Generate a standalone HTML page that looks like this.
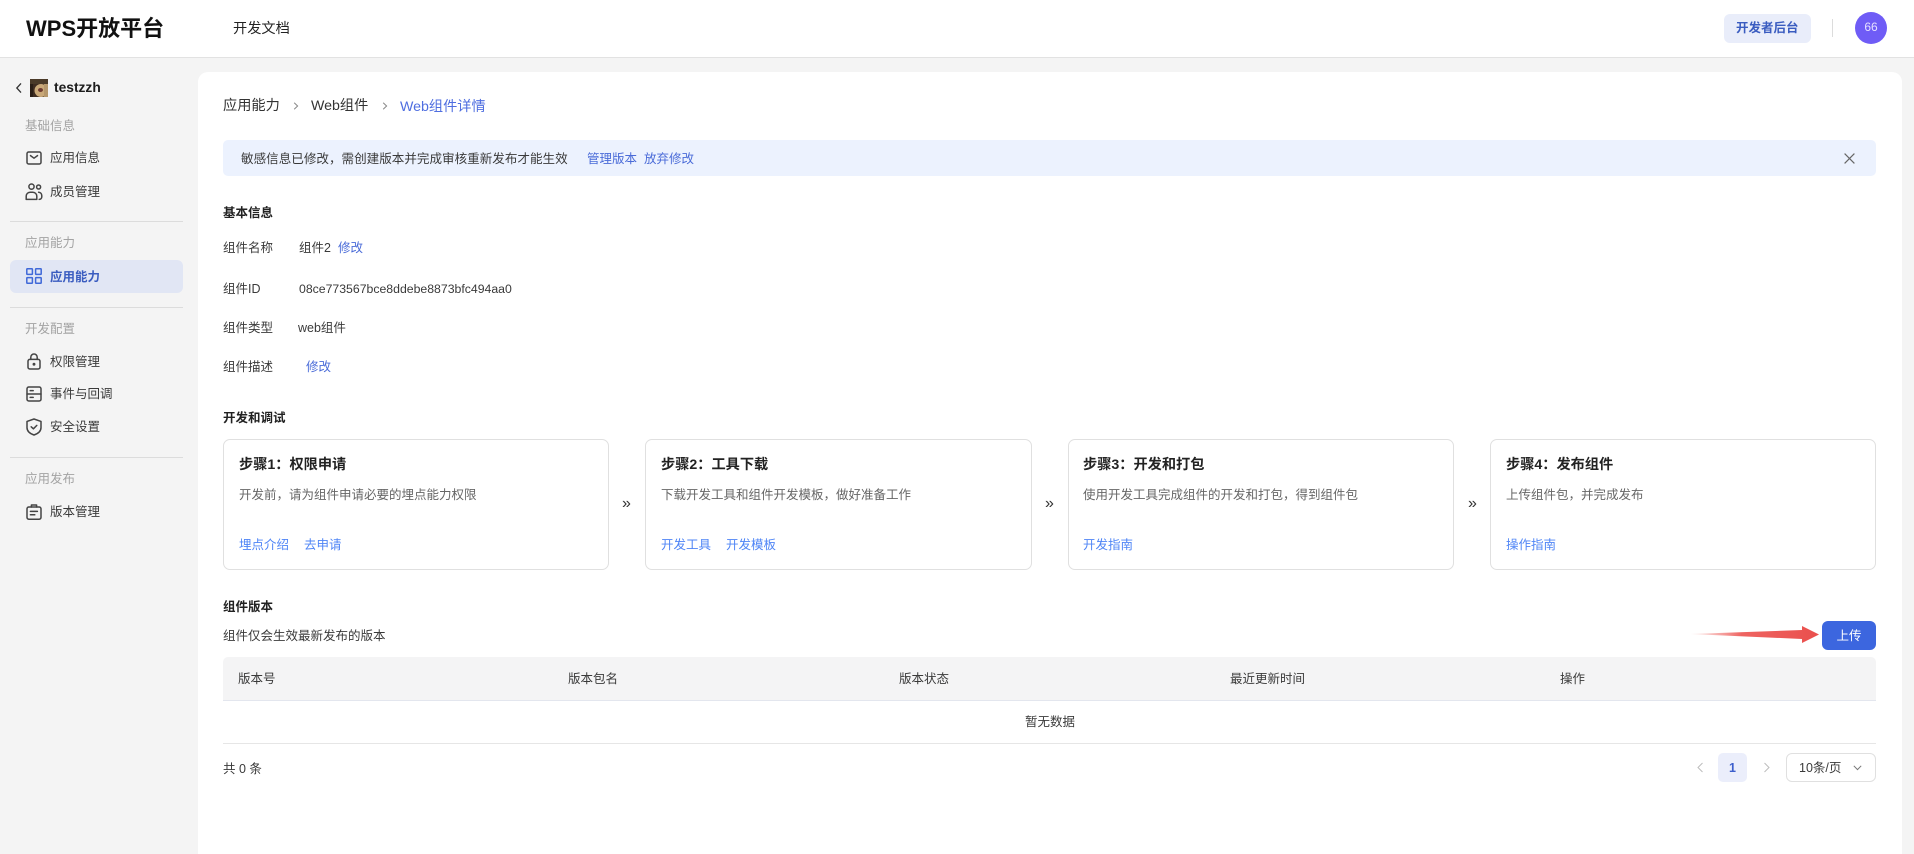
<!DOCTYPE html>
<html lang="zh-CN">
<head>
<meta charset="utf-8">
<title>WPS开放平台</title>
<style>
html,body{margin:0;padding:0;width:1914px;height:854px;overflow:hidden;background:#f4f4f4;}
body{position:relative;font-family:"Liberation Sans","Noto Sans CJK SC",sans-serif;font-size:12.5px;color:#333;}
.b{position:absolute;box-sizing:border-box;}
.t{position:absolute;line-height:20px;height:20px;white-space:nowrap;}
.bd{font-weight:700;color:#222;}
.link{color:#4a6bd8;}
.lk{color:#4f85f6;}
.gr{color:#a3a3a3;}
.dk{color:#3a3a3a;}
.desc{color:#666;}
svg{position:absolute;overflow:visible;}
.card{position:absolute;top:439px;height:131px;background:#fff;border:1px solid #e0e0e0;border-radius:7px;box-sizing:border-box;}
.ic{fill:none;stroke:#444;stroke-width:1.5;stroke-linejoin:round;stroke-linecap:round;}
</style>
</head>
<body>
<!-- header -->
<div class="b" style="left:0;top:0;width:1914px;height:58px;background:#fff;border-bottom:1px solid #e2e2e2;"></div>
<div class="t" style="left:26px;top:18px;font-size:22px;line-height:22px;height:22px;font-weight:700;color:#111;">WPS开放平台</div>
<div class="t" style="left:233px;top:19px;font-size:14.2px;color:#222;">开发文档</div>
<div class="b" style="left:1724px;top:14px;width:87px;height:29px;background:#e9edfa;border-radius:6px;"></div>
<div class="t" style="left:1736px;top:18px;font-weight:700;color:#3a5cc0;">开发者后台</div>
<div class="b" style="left:1832px;top:19px;width:1px;height:18px;background:#dcdcdc;"></div>
<div class="b" style="left:1855px;top:12px;width:32px;height:32px;border-radius:50%;background:#6f5cf6;"></div>
<div class="t" style="left:1855px;top:17px;width:32px;text-align:center;font-size:12px;color:#e6e0ff;">66</div>

<!-- sidebar -->
<svg style="left:15px;top:82px" width="8" height="12" viewBox="0 0 8 12"><path d="M6 1.4 1.8 6 6 10.6" fill="none" stroke="#333" stroke-width="1.3"/></svg>
<svg style="left:30px;top:79px" width="18" height="18" viewBox="0 0 18 18"><rect width="18" height="18" fill="#3e2c20"/><rect x="0" y="0" width="18" height="5" fill="#4a3a28"/><rect x="0" y="5" width="3" height="13" fill="#2a1e16"/><ellipse cx="11" cy="11.5" rx="6.5" ry="6.5" fill="#c9a878"/><rect x="14" y="5" width="4" height="13" fill="#b5976b"/><ellipse cx="10.5" cy="11" rx="2.5" ry="2" fill="#6e3b30"/></svg>
<div class="t bd" style="left:54px;top:78px;font-size:13.8px;color:#1c1c1c;">testzzh</div>

<div class="t gr" style="left:25px;top:116px;">基础信息</div>
<svg class="ic" style="left:26px;top:151px" width="16" height="14" viewBox="0 0 16 14"><rect x="1" y="1" width="14" height="12" rx="1.6"/><path d="M4.5 4.6 8 7.2l3.5-2.6"/></svg>
<div class="t dk" style="left:50px;top:148px;">应用信息</div>
<svg class="ic" style="left:25px;top:183px" width="18" height="18" viewBox="0 0 18 18"><circle cx="6.5" cy="3.6" r="2.6"/><circle cx="13.6" cy="4" r="2"/><path d="M1.2 16.4v-3.2c0-2.2 1.7-4 4-4h2.6c2.2 0 4 1.8 4 4v3.2z"/><path d="M13.6 9.2c1.8.1 3.2 1.6 3.2 3.6v.8c0 1.6-1 2.8-2.6 2.8"/></svg>
<div class="t dk" style="left:50px;top:182px;">成员管理</div>

<div class="b" style="left:10px;top:221px;width:173px;height:1px;background:#dcdcdc;"></div>
<div class="t gr" style="left:25px;top:233px;">应用能力</div>
<div class="b" style="left:10px;top:260px;width:173px;height:33px;background:#e1e6f4;border-radius:6px;"></div>
<svg style="left:26px;top:268px" width="16" height="16" viewBox="0 0 16 16" fill="none" stroke="#3f68d8" stroke-width="1.5"><rect x=".8" y=".8" width="5.6" height="5.6" rx=".6"/><rect x="9.6" y=".8" width="5.6" height="5.6" rx=".6"/><rect x=".8" y="9.6" width="5.6" height="5.6" rx=".6"/><rect x="9.6" y="9.6" width="5.6" height="5.6" rx=".6"/></svg>
<div class="t" style="left:50px;top:267px;font-weight:700;color:#3a5cc0;">应用能力</div>

<div class="b" style="left:10px;top:307px;width:173px;height:1px;background:#dcdcdc;"></div>
<div class="t gr" style="left:25px;top:319px;">开发配置</div>
<svg class="ic" style="left:27px;top:353px" width="14" height="17" viewBox="0 0 14 17"><rect x="1" y="6.4" width="12" height="9.6" rx="1.8"/><path d="M3.8 6.4V4.2a3.2 3.2 0 0 1 6.4 0v2.2"/><circle cx="7" cy="11.2" r=".7" fill="#444"/></svg>
<div class="t dk" style="left:50px;top:352px;">权限管理</div>
<svg class="ic" style="left:26px;top:386px" width="16" height="16" viewBox="0 0 16 16"><rect x="1" y="1" width="14" height="14" rx="1.8"/><path d="M1 8h14M4.2 4.6h3M4.2 11.4h3"/></svg>
<div class="t dk" style="left:50px;top:384px;">事件与回调</div>
<svg class="ic" style="left:26px;top:418px" width="16" height="18" viewBox="0 0 16 18"><path d="M8 1 15 3.4v6.2c0 3.6-3 6-7 7.4-4-1.4-7-3.8-7-7.4V3.4z"/><path d="M5.2 8.8 7.4 10.8l3.4-3.4"/></svg>
<div class="t dk" style="left:50px;top:417px;">安全设置</div>

<div class="b" style="left:10px;top:457px;width:173px;height:1px;background:#dcdcdc;"></div>
<div class="t gr" style="left:25px;top:469px;">应用发布</div>
<svg class="ic" style="left:26px;top:504px" width="16" height="16" viewBox="0 0 16 16"><rect x="1" y="3" width="14" height="12.2" rx="1.8"/><path d="M5.4 3V1h5.2v2M4.4 7.4h7M4.4 10.8h4.4"/></svg>
<div class="t dk" style="left:50px;top:502px;">版本管理</div>

<!-- main panel -->
<div class="b" style="left:198px;top:72px;width:1704px;height:800px;background:#fff;border-radius:10px;"></div>

<!-- breadcrumb -->
<div class="t" style="left:223px;top:96px;font-size:14.2px;color:#333;">应用能力</div>
<svg style="left:293px;top:102px" width="6" height="8" viewBox="0 0 6 8"><path d="M1.2.8 4.6 4 1.2 7.2" fill="none" stroke="#888" stroke-width="1"/></svg>
<div class="t" style="left:311px;top:96px;font-size:14.2px;color:#333;">Web组件</div>
<svg style="left:382px;top:102px" width="6" height="8" viewBox="0 0 6 8"><path d="M1.2.8 4.6 4 1.2 7.2" fill="none" stroke="#888" stroke-width="1"/></svg>
<div class="t" style="left:400px;top:97px;font-size:14.2px;color:#4f6ee0;">Web组件详情</div>

<!-- alert -->
<div class="b" style="left:223px;top:140px;width:1653px;height:36px;background:#ecf2fe;border-radius:5px;"></div>
<div class="t" style="left:241px;top:149px;color:#3a3a3a;font-size:12.57px;">敏感信息已修改，需创建版本并完成审核重新发布才能生效</div>
<div class="t link" style="left:587px;top:149px;">管理版本</div>
<div class="t link" style="left:644px;top:149px;">放弃修改</div>
<svg style="left:1844px;top:153px" width="11" height="11" viewBox="0 0 11 11"><path d="M.6.6l9.8 9.8M10.4.6.6 10.4" fill="none" stroke="#666" stroke-width="1.2"/></svg>

<!-- basic info -->
<div class="t bd" style="left:223px;top:203px;">基本信息</div>
<div class="t dk" style="left:223px;top:238px;">组件名称</div>
<div class="t dk" style="left:299px;top:238px;">组件2</div>
<div class="t link" style="left:338px;top:238px;">修改</div>
<div class="t dk" style="left:223px;top:279px;">组件ID</div>
<div class="t dk" style="left:299px;top:279px;font-size:12.28px;">08ce773567bce8ddebe8873bfc494aa0</div>
<div class="t dk" style="left:223px;top:318px;">组件类型</div>
<div class="t dk" style="left:298px;top:318px;">web组件</div>
<div class="t dk" style="left:223px;top:357px;">组件描述</div>
<div class="t link" style="left:306px;top:357px;">修改</div>

<div class="t bd" style="left:223px;top:408px;">开发和调试</div>

<!-- cards -->
<div class="card" style="left:223px;width:386px;"></div>
<div class="t bd" style="left:239px;top:455px;font-size:14.2px;">步骤1：权限申请</div>
<div class="t desc" style="left:239px;top:485px;">开发前，请为组件申请必要的埋点能力权限</div>
<div class="t lk" style="left:239px;top:535px;">埋点介绍</div>
<div class="t lk" style="left:304px;top:535px;">去申请</div>
<div class="t" style="left:622px;top:494px;font-size:16px;color:#333;">»</div>

<div class="card" style="left:645px;width:387px;"></div>
<div class="t bd" style="left:661px;top:455px;font-size:14.2px;">步骤2：工具下载</div>
<div class="t desc" style="left:661px;top:485px;">下载开发工具和组件开发模板，做好准备工作</div>
<div class="t lk" style="left:661px;top:535px;">开发工具</div>
<div class="t lk" style="left:726px;top:535px;">开发模板</div>
<div class="t" style="left:1045px;top:494px;font-size:16px;color:#333;">»</div>

<div class="card" style="left:1068px;width:386px;"></div>
<div class="t bd" style="left:1083px;top:455px;font-size:14.2px;">步骤3：开发和打包</div>
<div class="t desc" style="left:1083px;top:485px;">使用开发工具完成组件的开发和打包，得到组件包</div>
<div class="t lk" style="left:1083px;top:535px;">开发指南</div>
<div class="t" style="left:1468px;top:494px;font-size:16px;color:#333;">»</div>

<div class="card" style="left:1490px;width:386px;"></div>
<div class="t bd" style="left:1506px;top:455px;font-size:14.2px;">步骤4：发布组件</div>
<div class="t desc" style="left:1506px;top:485px;">上传组件包，并完成发布</div>
<div class="t lk" style="left:1506px;top:535px;">操作指南</div>

<!-- versions -->
<div class="t bd" style="left:223px;top:597px;">组件版本</div>
<div class="t dk" style="left:223px;top:626px;">组件仅会生效最新发布的版本</div>
<svg style="left:1688px;top:624px" width="134" height="22" viewBox="0 0 134 22"><defs><linearGradient id="g" x1="0" x2="1" y1="0" y2="0"><stop offset="0" stop-color="#f2837f" stop-opacity=".1"/><stop offset=".4" stop-color="#ee6461"/><stop offset="1" stop-color="#ea4f4d"/></linearGradient></defs><path d="M2 10 L114 6 L114 2 L131 10.5 L114 19 L114 15 Z" fill="url(#g)"/></svg>
<div class="b" style="left:1822px;top:621px;width:54px;height:29px;background:#3c66df;border-radius:6px;"></div>
<div class="t" style="left:1822px;top:626px;width:54px;text-align:center;color:#fff;">上传</div>

<div class="b" style="left:223px;top:657px;width:1653px;height:44px;background:#f4f4f5;border-bottom:1px solid #e3e6ee;border-radius:5px 5px 0 0;"></div>
<div class="t dk" style="left:238px;top:669px;">版本号</div>
<div class="t dk" style="left:568px;top:669px;">版本包名</div>
<div class="t dk" style="left:899px;top:669px;">版本状态</div>
<div class="t dk" style="left:1230px;top:669px;">最近更新时间</div>
<div class="t dk" style="left:1560px;top:669px;">操作</div>
<div class="t dk" style="left:1025px;top:712px;">暂无数据</div>
<div class="b" style="left:223px;top:743px;width:1653px;height:1px;background:#e6e6e6;"></div>

<div class="t dk" style="left:223px;top:759px;">共 0 条</div>
<svg style="left:1696px;top:762px" width="8" height="11" viewBox="0 0 8 11"><path d="M6.5 1 2 5.5 6.5 10" fill="none" stroke="#bdbdbd" stroke-width="1"/></svg>
<div class="b" style="left:1718px;top:753px;width:29px;height:29px;background:#ebeefb;border-radius:5px;"></div>
<div class="t" style="left:1718px;top:758px;width:29px;text-align:center;font-weight:700;color:#3d5fcc;">1</div>
<svg style="left:1763px;top:762px" width="8" height="11" viewBox="0 0 8 11"><path d="M1.5 1 6 5.5 1.5 10" fill="none" stroke="#bdbdbd" stroke-width="1"/></svg>
<div class="b" style="left:1786px;top:753px;width:90px;height:29px;border:1px solid #e0e0e0;border-radius:6px;background:#fff;"></div>
<div class="t dk" style="left:1799px;top:758px;">10条/页</div>
<svg style="left:1853px;top:765px" width="9" height="6" viewBox="0 0 9 6"><path d="M.8.8 4.5 4.6 8.2.8" fill="none" stroke="#777" stroke-width="1"/></svg>
</body>
</html>
